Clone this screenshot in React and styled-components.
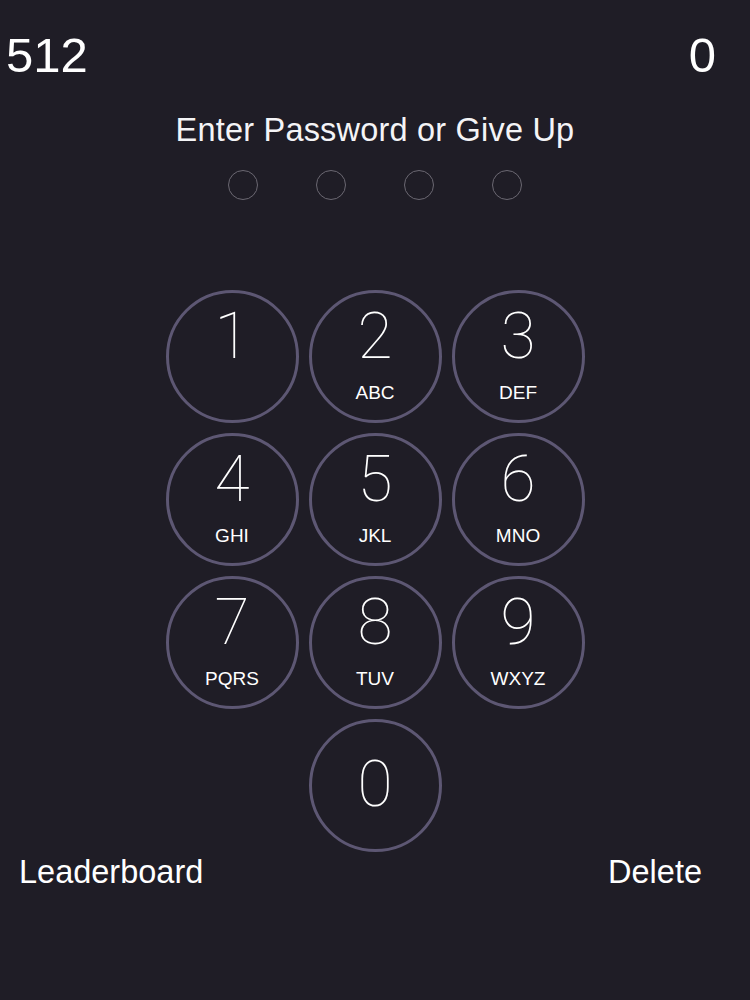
import React from 'react'
import styled, { createGlobalStyle } from 'styled-components'

const GlobalStyle = createGlobalStyle`
  html, body {
    margin: 0;
    padding: 0;
    background: #1f1d26;
  }
  body {
    font-family: "Liberation Sans", Arial, sans-serif;
    color: #ffffff;
  }
`

const keys = [
  { digit: '1', letters: '' },
  { digit: '2', letters: 'ABC' },
  { digit: '3', letters: 'DEF' },
  { digit: '4', letters: 'GHI' },
  { digit: '5', letters: 'JKL' },
  { digit: '6', letters: 'MNO' },
  { digit: '7', letters: 'PQRS' },
  { digit: '8', letters: 'TUV' },
  { digit: '9', letters: 'WXYZ' },
]

function App() {
  return (
    <Screen>
      <GlobalStyle />
      <ScoreBar>
        <Score>512</Score>
        <Score>0</Score>
      </ScoreBar>

      <Title>Enter Password or Give Up</Title>

      <Dots>
        {[0, 1, 2, 3].map((i) => (
          <Dot key={i} />
        ))}
      </Dots>

      <Keypad>
        {keys.map((k) => (
          <Key key={k.digit}>
            <Digit>{k.digit}</Digit>
            {k.letters && <Letters>{k.letters}</Letters>}
          </Key>
        ))}
        <Key $centered $column={2}>
          <Digit>0</Digit>
        </Key>
      </Keypad>

      <BottomBar>
        <TextButton>Leaderboard</TextButton>
        <TextButton>Delete</TextButton>
      </BottomBar>
    </Screen>
  )
}

const Screen = styled.div`
  width: 750px;
  height: 1000px;
  background: #1f1d26;
  display: flex;
  flex-direction: column;
  align-items: center;
  overflow: hidden;
`

const ScoreBar = styled.div`
  align-self: stretch;
  display: flex;
  justify-content: space-between;
  padding: 31px 34px 0 6px;
`

const Score = styled.div`
  font-size: 49px;
  line-height: 1;
  color: #ffffff;
`

const Title = styled.div`
  margin-top: 34px;
  font-size: 32.5px;
  line-height: 1;
  color: #f4f4f6;
  letter-spacing: 0.2px;
`

const Dots = styled.div`
  margin-top: 23px;
  display: flex;
  gap: 58px;
`

const Dot = styled.div`
  width: 30px;
  height: 30px;
  box-sizing: border-box;
  border-radius: 50%;
  border: 1.2px solid #6b6872;
`

const Keypad = styled.div`
  margin-top: 90px;
  display: grid;
  grid-template-columns: repeat(3, 133px);
  grid-auto-rows: 133px;
  gap: 10px;
`

const Key = styled.div`
  box-sizing: border-box;
  width: 133px;
  height: 133px;
  border-radius: 50%;
  border: 3px solid #5d5773;
  display: flex;
  flex-direction: column;
  align-items: center;
  justify-content: ${(p) => (p.$centered ? 'center' : 'flex-start')};
  padding-top: ${(p) => (p.$centered ? '0' : '12px')};
  grid-column: ${(p) => p.$column || 'auto'};
`

const Digit = styled.div`
  font-family: Roboto, "Liberation Sans", sans-serif;
  font-weight: 100;
  font-size: 64px;
  line-height: 1;
  color: #ffffff;
`

const Letters = styled.div`
  margin-top: 14px;
  font-size: 19px;
  line-height: 1;
  color: #ffffff;
`

const BottomBar = styled.div`
  align-self: stretch;
  display: flex;
  justify-content: space-between;
  margin-top: 4px;
  padding: 0 48px 0 19px;
`

const TextButton = styled.div`
  font-size: 32.5px;
  line-height: 1;
  color: #ffffff;
`

export default App
